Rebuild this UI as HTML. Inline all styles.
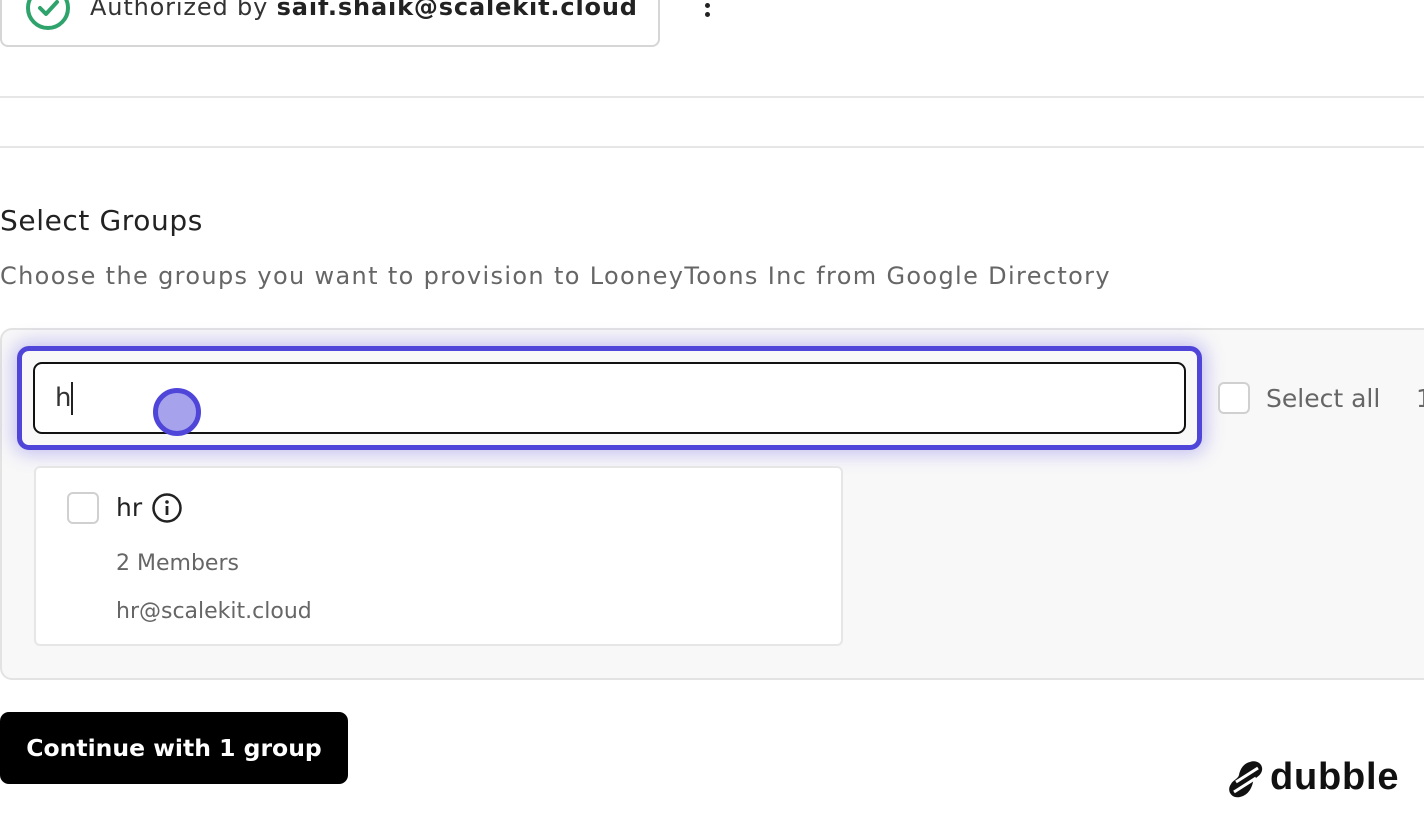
<!DOCTYPE html>
<html><head><style>
*{box-sizing:border-box;margin:0;padding:0}
body{width:1424px;height:814px;overflow:hidden;background:#fff;font-family:"DejaVu Sans","Liberation Sans",sans-serif;position:relative;color:#1a1a1a}
.abs{position:absolute;white-space:nowrap}
</style></head><body>
<div class="abs" style="left:0;top:-30px;width:660px;height:77px;border:2px solid #d6d6d6;border-radius:8px"></div>
<svg class="abs" style="left:24px;top:-16px" width="48" height="48" viewBox="0 0 48 48"><circle cx="24" cy="24" r="20" fill="none" stroke="#2ea36b" stroke-width="4"/><path d="M16 24l6 6 11-12" fill="none" stroke="#2ea36b" stroke-width="4" stroke-linecap="round" stroke-linejoin="round"/></svg>
<div class="abs" style="left:90px;top:-7px;font-size:24px;color:#333;letter-spacing:0.85px">Authorized by <b style="color:#222">saif.shaik@scalekit.cloud</b></div>
<div class="abs" style="left:705px;top:3px;width:5px;height:5px;border-radius:50%;background:#222"></div>
<div class="abs" style="left:705px;top:12px;width:5px;height:5px;border-radius:50%;background:#222"></div>
<div class="abs" style="left:0;top:96px;width:1424px;height:2px;background:#e6e6e6"></div>
<div class="abs" style="left:0;top:146px;width:1424px;height:2px;background:#e6e6e6"></div>
<div class="abs" style="left:0;top:204px;font-size:28px;color:#222;letter-spacing:0.6px">Select Groups</div>
<div class="abs" style="left:0;top:262px;font-size:24px;color:#666;letter-spacing:1.35px">Choose the groups you want to provision to LooneyToons Inc from Google Directory</div>
<div class="abs" style="left:0;top:328px;width:1440px;height:352px;background:#f8f8f8;border:2px solid #e3e3e3;border-radius:12px"></div>
<div class="abs" style="left:17px;top:346px;width:1185px;height:104px;border:5px solid #4f46d9;border-radius:12px;box-shadow:0 0 18px 4px rgba(99,90,230,.35)"></div>
<div class="abs" style="left:33px;top:362px;width:1153px;height:72px;border:2px solid #111;border-radius:9px;background:#fff"></div>
<div class="abs" style="left:55px;top:383px;font-size:26px;color:#333">h</div>
<div class="abs" style="left:71px;top:382px;width:2px;height:33px;background:#222"></div>
<div class="abs" style="left:153px;top:388px;width:48px;height:48px;border-radius:50%;background:#a6a3ec;border:5px solid #4f46d9"></div>
<div class="abs" style="left:1218px;top:382px;width:32px;height:32px;border:2px solid #d0d0d0;border-radius:6px;background:#fff"></div>
<div class="abs" style="left:1266px;top:384px;font-size:25px;color:#666">Select all</div>
<div class="abs" style="left:1416px;top:384px;font-size:25px;color:#666">1</div>
<div class="abs" style="left:34px;top:466px;width:809px;height:180px;background:#fff;border:2px solid #e6e6e6;border-radius:6px"></div>
<div class="abs" style="left:67px;top:492px;width:32px;height:32px;border:2px solid #d0d0d0;border-radius:6px;background:#fff"></div>
<div class="abs" style="left:116px;top:493px;font-size:25px;color:#222">hr</div>
<svg class="abs" style="left:151px;top:492px" width="32" height="32" viewBox="0 0 32 32"><circle cx="16" cy="16" r="13.5" fill="none" stroke="#222" stroke-width="2.5"/><circle cx="16" cy="10" r="1.8" fill="#222"/><path d="M16 14v9" stroke="#222" stroke-width="2.8"/></svg>
<div class="abs" style="left:116px;top:551px;font-size:22px;color:#666">2 Members</div>
<div class="abs" style="left:116px;top:599px;font-size:22px;color:#666">hr@scalekit.cloud</div>
<div class="abs" style="left:0;top:712px;width:348px;height:72px;background:#000;border-radius:9px;color:#fff;font-size:23.5px;font-weight:bold;display:flex;align-items:center;justify-content:center">Continue with 1 group</div>
<svg class="abs" style="left:1228px;top:760px" width="38" height="40" viewBox="0 0 38 40"><path d="M22 2c8-3 15 4 11 11-2 4-7 5-8 9-1 5-4 13-13 15C4 39-2 31 3 24c2-4 7-5 8-9 1-6 5-12 11-13z" fill="#111"/><path d="M8 22L30 8M6 32L28 18" stroke="#fff" stroke-width="3"/></svg>
<div class="abs" style="left:1270px;top:756px;font-size:38px;font-family:'Liberation Sans',sans-serif;font-weight:bold;color:#111;letter-spacing:0.8px">dubble</div>
</body></html>
